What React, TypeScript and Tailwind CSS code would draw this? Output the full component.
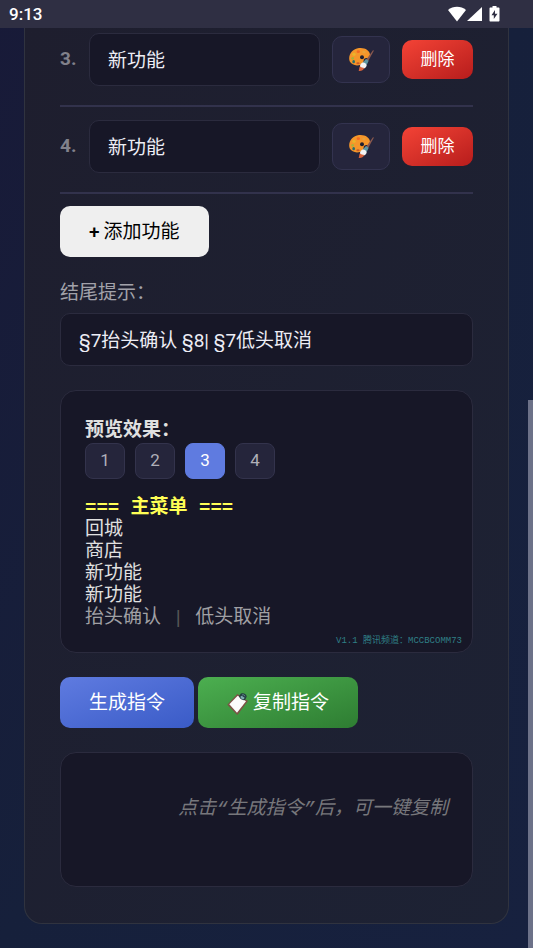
import { useState } from "react"

const FEATURES = [
  { id: 3, name: "新功能" },
  { id: 4, name: "新功能" },
]

const PAGES = [1, 2, 3, 4]

const MENU_ITEMS = ["回城", "商店", "新功能", "新功能"]

const fieldClass =
  "h-[53px] min-w-0 rounded-[10px] border border-[#2b2b3e] bg-[#171727] px-[18px] pb-[3px] text-[19px] text-[#ededf5] outline-none"

const buttonClass = "flex h-[51px] items-center gap-1 rounded-[10px] px-[29px] pt-0.5 text-[19px]"

function PaletteIcon() {
  return (
    <svg viewBox="0 0 75 75" className="size-[25px]" aria-hidden="true">
      <path
        d="M30 3C48 1 62 10 63 23c0 7-5 10-11 10-5 0-8 3-8 7 0 5-2 10-9 13-11 5-27 2-33-10C-4 25 9 5 30 3Z"
        fill="#f5962a"
      />
      <circle cx="39" cy="31" r="6" fill="#1f1f30" />
      <ellipse cx="28" cy="14" rx="5" ry="4" fill="#f26a22" />
      <ellipse cx="45" cy="15" rx="5" ry="4" fill="#e8a33c" />
      <ellipse cx="15" cy="22" rx="5" ry="5" fill="#e9b52c" />
      <ellipse cx="11" cy="34" rx="4" ry="4" fill="#a8b33a" />
      <ellipse cx="14" cy="44" rx="4" ry="5" fill="#27706b" />
      <ellipse cx="27" cy="49" rx="5" ry="3" fill="#c95a2a" />
      <path d="M72 10c2-1 3 0 2 2L57 43l-6-4Z" fill="#8d5a4e" />
      <path d="m51 36 8 5-6 13-13-6Z" fill="#5f97a3" />
      <path d="M40 47c6-1 12 3 13 9-2 6-7 9-12 9-6-1-9-4-8-9 1-4 3-8 7-9Z" fill="#f3f3f3" />
      <path d="M33 58c3 4 8 5 13 5-3 7-9 10-17 9 2-4 1-10 4-14Z" fill="#d8633c" />
    </svg>
  )
}

function ClipboardIcon() {
  return (
    <svg viewBox="0 0 66 66" className="size-[22px]" aria-hidden="true">
      <path d="M31 3 63 24 31 66 1 35Z" fill="#7d5145" />
      <path d="M32 8 57 25 30 59 7 34Z" fill="#fbfbfb" />
      <path d="m36 9 5-7c8-4 18 1 18 9l-5 10c-8 2-17-4-18-12Z" fill="#223c40" />
      <path d="m40 11 4-3 9 6-3 5c-5 0-9-3-10-8Z" fill="#7faab2" />
      <path d="M45 6c4-2 8 0 9 4" stroke="#7faab2" strokeWidth="2" fill="none" />
    </svg>
  )
}

function StatusBar() {
  return (
    <header className="flex h-7 items-center justify-between bg-[#2f2f43] pr-8 pl-[9px] text-white">
      <span className="pt-0.5 text-[17px] font-medium">9:13</span>
      <svg viewBox="0 0 53 16" className="h-4 w-[53px]" fill="#ffffff" aria-hidden="true">
        <path d="M0 4C5-.4 13-.4 18 4L9 15.500Z" />
        <path d="M34 1v14H19Z" />
        <path
          fillRule="evenodd"
          d="M44.500 0h4v1.500h2c.6 0 1 .4 1 1v12c0 .6-.4 1-1 1h-8c-.6 0-1-.4-1-1v-12c0-.6.4-1 1-1h2ZM47 4l-3.500 5.200h2.300V13l3.700-5.300h-2.500Z"
        />
      </svg>
    </header>
  )
}

export default function App() {
  const [page, setPage] = useState(3)

  return (
    <div className="relative flex min-h-screen flex-col bg-linear-to-br from-[#181a38] via-[#16203b] to-[#17213f] font-[Roboto,'Noto_Sans_CJK_SC',sans-serif]">
      <StatusBar />

      <main className="mx-6 mb-6 rounded-b-[18px] border border-t-0 border-[#30333f] bg-linear-to-br from-[#1e1e2e] to-[#1d2234] px-[35px] pt-[5px] pb-9">
        <ul className="flex flex-col gap-[13px]">
          {FEATURES.map((feature) => (
            <li key={feature.id} className="flex items-center border-b-2 border-[#32324c] pb-[19px]">
              <label htmlFor={`feature-${feature.id}`} className="w-[29px] shrink-0 text-[19px] font-bold text-[#81818b]">
                {feature.id}.
              </label>
              <input
                id={`feature-${feature.id}`}
                type="text"
                defaultValue={feature.name}
                className={`${fieldClass} flex-1`}
              />
              <button
                type="button"
                aria-label="颜色"
                className="ml-3 flex h-[47px] w-[58px] shrink-0 items-center justify-center rounded-[10px] border border-[#33334f] bg-[#25253c]"
              >
                <PaletteIcon />
              </button>
              <button
                type="button"
                className="ml-3 h-[39px] w-[71px] shrink-0 rounded-[10px] bg-linear-to-br from-[#f44336] to-[#b71c1c] text-[17px] text-white"
              >
                删除
              </button>
            </li>
          ))}
        </ul>

        <button type="button" className={`${buttonClass} mt-3 bg-[#efefef] text-black`}>
          <span className="font-medium">+</span>
          <span>添加功能</span>
        </button>

        <label htmlFor="footer-hint" className="mt-[23px] block text-[19px] leading-[26px] text-[#a2a2aa]">
          结尾提示：
        </label>
        <input
          id="footer-hint"
          type="text"
          defaultValue="§7抬头确认 §8| §7低头取消"
          className={`${fieldClass} mt-[7px] w-full`}
        />

        <section className="relative mt-6 rounded-2xl border border-[#2b2b3e] bg-[#171727] px-6 pt-[26px] pb-[23px] text-[19px] text-[#e0e0e0]">
          <h2 className="leading-[26px] font-bold">预览效果：</h2>
          <div className="flex gap-2.5">
            {PAGES.map((n) => (
              <button
                key={n}
                type="button"
                onClick={() => setPage(n)}
                className={
                  n === page
                    ? "h-9 w-10 rounded-lg border border-[#5f7be0] bg-[#5f7be0] text-[17px] text-white"
                    : "h-9 w-10 rounded-lg border border-[#33334c] bg-[#25253b] text-[17px] text-[#b0b0b8]"
                }
              >
                {n}
              </button>
            ))}
          </div>
          <div className="mt-[18px] font-['Liberation_Mono','Noto_Sans_CJK_SC',monospace] leading-[22px]">
            <p className="font-bold text-[#ffff55]">=== 主菜单 ===</p>
            {MENU_ITEMS.map((item, index) => (
              <p key={index}>{item}</p>
            ))}
            <p className="text-[#a0a0a4]">
              抬头确认 <span className="text-[#555555]">|</span> 低头取消
            </p>
          </div>
          <span className="absolute right-2.5 bottom-1 font-['Liberation_Mono','Noto_Sans_CJK_SC',monospace] text-[9px] leading-[14px] text-[#2f7f86]">
            V1.1 腾讯频道：MCCBCOMM73
          </span>
        </section>

        <div className="mt-6 flex gap-1">
          <button type="button" className={`${buttonClass} bg-linear-to-br from-[#5f7be0] to-[#3a5bc7] text-white`}>
            生成指令
          </button>
          <button type="button" className={`${buttonClass} bg-linear-to-br from-[#4caf50] to-[#2e7d32] text-white`}>
            <ClipboardIcon />
            <span>复制指令</span>
          </button>
        </div>

        <div className="mt-6 min-h-[135px] rounded-2xl border border-[#2b2b3e] bg-[#171727] px-6 pt-[43px] text-right font-['Liberation_Mono','Noto_Sans_CJK_SC',monospace] text-[19px] leading-[26px] text-[#77777c] italic">
          点击“生成指令”后，可一键复制
        </div>
      </main>

      {/* scroll indicator */}
      <div className="absolute top-[400px] right-0 bottom-0 w-[5px] bg-[#6c7188]" />
    </div>
  )
}
